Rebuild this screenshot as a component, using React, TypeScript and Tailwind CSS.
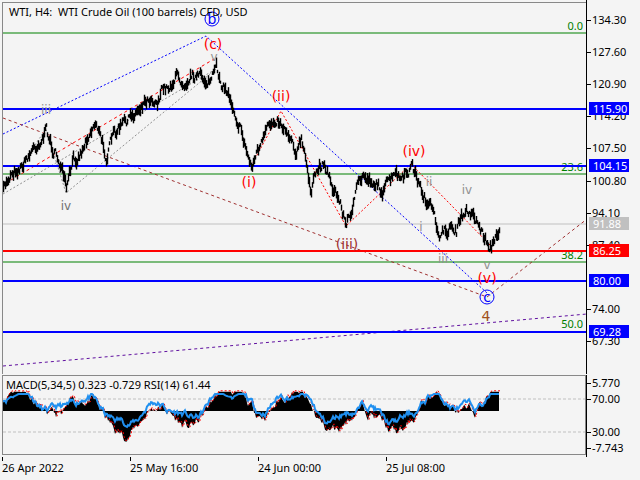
import React from "react";

const key: [number, number][] = [
  [2, 190], [10, 170], [20, 165], [30, 150], [38, 140], [45, 130], [52, 150], [58, 160], [65, 190], [72, 160], [80, 150], [88, 130], [95, 120], [100, 140], [105, 155], [112, 135], [120, 125], [128, 118], [135, 110], [142, 100], [150, 95], [156, 100], [160, 90], [168, 85], [175, 75], [182, 80], [190, 72], [200, 78], [208, 80], [215, 70], [222, 85], [228, 95], [232, 105], [240, 130], [245, 150], [250, 165], [256, 150], [262, 140], [268, 125], [275, 115], [282, 125], [290, 135], [295, 150], [300, 140], [305, 165], [310, 190], [316, 170], [322, 160], [328, 175], [333, 190], [340, 205], [345, 225], [352, 200], [357, 185], [362, 175], [372, 180], [382, 190], [388, 180], [395, 175], [402, 180], [410, 165], [415, 175], [420, 190], [430, 210], [435, 225], [440, 235], [450, 225], [455, 230], [460, 218], [468, 208], [475, 218], [482, 235], [487, 243], [490, 245], [496, 235], [498, 225],
];

function rng(seed: number) {
  let s = seed;
  return () => {
    s = (s * 16807) % 2147483647;
    return s / 2147483647;
  };
}

function series() {
  const r = rng(7);
  const bars: { x: number; hi: number; lo: number }[] = [];
  let n = 0;
  for (let x = 2; x <= 498; x++) {
    let i = 0;
    while (i < key.length - 2 && key[i + 1][0] < x) i++;
    const [x0, y0] = key[i];
    const [x1, y1] = key[i + 1];
    const t = Math.min(1, Math.max(0, (x - x0) / (x1 - x0)));
    n = n * 0.6 + (r() - 0.5) * 9;
    const y = y0 + (y1 - y0) * t + n;
    const h = 3 + r() * 9;
    bars.push({ x, hi: y - h / 2, lo: y + h / 2 });
  }
  return bars;
}

const bars = series();

function ind() {
  const r = rng(11);
  const pts: number[] = [];
  let v = 0;
  for (let x = 2; x <= 498; x++) {
    v = v * 0.85 + (r() - 0.5) * 5;
    const base = Math.sin(x / 11) * 9 + Math.sin(x / 37 + 1) * 7;
    pts.push(Math.max(-19, Math.min(12, v + base)));
  }
  return pts;
}
const osc = ind();

const Lbl = ({ x, y, t, c, s = 14 }: { x: number; y: number; t: string; c: string; s?: number }) => (
  <text x={x} y={y} fill={c} fontSize={s} textAnchor="middle" fontFamily="DejaVu Sans, sans-serif">{t}</text>
);

const axis: [string, number][] = [
  ["134.30", 20], ["127.60", 52], ["120.90", 84], ["114.20", 116], ["107.50", 148], ["100.80", 181], ["94.10", 213], ["87.40", 245], ["74.00", 309], ["67.30", 341],
];
const boxes: [string, number, string, string][] = [
  ["115.90", 108, "bg-[#0000ff]", "text-white"],
  ["104.15", 165, "bg-[#0000ff]", "text-white"],
  ["91.88", 223, "bg-[#c0c0c0]", "text-white"],
  ["86.25", 250, "bg-[#ff0000]", "text-white"],
  ["80.00", 280, "bg-[#0000ff]", "text-white"],
  ["69.28", 331, "bg-[#0000ff]", "text-white"],
];

export default function App() {
  const blue = "#0000ff";
  return (
    <div className="w-[640px] h-[480px] bg-[#f4f4f4] flex flex-col font-['DejaVu_Sans',sans-serif] text-[11px] text-black overflow-hidden">
      <div className="flex h-[374px]">
        <div className="relative w-[584px] border-l border-t border-[#888] ml-[2px] mt-[2px]">
          <div className="absolute left-[6px] top-[1px] text-[11px]">WTI, H4:&nbsp; WTI Crude Oil (100 barrels) CFD, USD</div>
          <svg width="584" height="372" className="block">
            <g transform="translate(-2,-2)">
              <line x1="2" x2="586" y1="32" y2="32" stroke="#008000" />
              <line x1="2" x2="586" y1="173" y2="173" stroke="#008000" />
              <line x1="2" x2="586" y1="261" y2="261" stroke="#008000" />
              <line x1="2" x2="586" y1="223" y2="223" stroke="#c0c0c0" />
              <text x="582" y="29" fill="#008000" fontSize="11" textAnchor="end">0.0</text>
              <text x="582" y="170" fill="#008000" fontSize="11" textAnchor="end">23.6</text>
              <text x="582" y="258" fill="#008000" fontSize="11" textAnchor="end">38.2</text>
              <text x="582" y="327" fill="#008000" fontSize="11" textAnchor="end">50.0</text>
              <polyline points="2,133 205,35 486,292" fill="none" stroke={blue} strokeDasharray="2 2" />
              <line x1="2" y1="117" x2="486" y2="296" stroke="#a03030" strokeDasharray="3 3" />
              <line x1="5" y1="182" x2="213" y2="58" stroke="#ff0000" strokeDasharray="3 3" />
              <line x1="2" y1="193" x2="215" y2="68" stroke="#909090" strokeDasharray="2 2" />
              <polyline points="250,165 280,110 345,225 410,163 490,245" fill="none" stroke="#ff0000" strokeDasharray="2 2" />
              <line x1="486" y1="296" x2="586" y2="218" stroke="#a03030" strokeDasharray="3 3" />
              <line x1="2" y1="365" x2="586" y2="313" stroke="#6010a0" strokeDasharray="3 3" />
              <polyline points="2,190 45,128 65,192 215,68" fill="none" stroke="#909090" strokeDasharray="2 2" />
              <line x1="2" x2="586" y1="108" y2="108" stroke={blue} strokeWidth="2" />
              <line x1="2" x2="586" y1="165" y2="165" stroke={blue} strokeWidth="2" />
              <line x1="2" x2="586" y1="280" y2="280" stroke={blue} strokeWidth="2" />
              <line x1="2" x2="586" y1="331" y2="331" stroke={blue} strokeWidth="2" />
              <line x1="2" x2="586" y1="250" y2="250" stroke="#ff0000" strokeWidth="2" />
              {bars.map((b) => (
                <line key={b.x} x1={b.x + 0.5} x2={b.x + 0.5} y1={b.hi} y2={b.lo} stroke="#000" strokeWidth="1.4" />
              ))}
              <circle cx="211" cy="18" r="7" fill="none" stroke={blue} />
              <Lbl x={211} y={23} t="b" c={blue} />
              <Lbl x={212} y={48} t="(c)" c="#ff0000" />
              <Lbl x={213} y={60} t="v" c="#909090" s={12} />
              <Lbl x={45} y={113} t="iii" c="#909090" s={12} />
              <Lbl x={65} y={209} t="iv" c="#707070" s={12} />
              <Lbl x={280} y={100} t="(ii)" c="#ff0000" />
              <Lbl x={248} y={186} t="(i)" c="#ff0000" />
              <Lbl x={413} y={155} t="(iv)" c="#ff0000" />
              <Lbl x={346} y={248} t="(iii)" c="#a03030" />
              <Lbl x={428} y={185} t="ii" c="#909090" s={12} />
              <Lbl x={420} y={230} t="i" c="#909090" s={12} />
              <Lbl x={442} y={262} t="iii" c="#909090" s={12} />
              <Lbl x={466} y={193} t="iv" c="#909090" s={12} />
              <Lbl x={486} y={268} t="v" c="#909090" s={12} />
              <Lbl x={486} y={282} t="(v)" c="#ff0000" />
              <circle cx="486" cy="296" r="7" fill="none" stroke={blue} />
              <Lbl x={486} y={301} t="c" c={blue} />
              <Lbl x={485} y={320} t="4" c="#a05020" />
            </g>
          </svg>
        </div>
        <div className="relative flex-1 border-l border-black">
          {axis.map(([t, y]) => (
            <div key={t} className="absolute left-0 flex items-center h-[12px]" style={{ top: y - 6 }}>
              <div className="w-[4px] h-px bg-black" />
              <span className="ml-[1px]">{t}</span>
            </div>
          ))}
          {boxes.map(([t, y, bg, fg]) => (
            <div key={t} className={`absolute left-[2px] h-[13px] w-[40px] leading-[13px] pl-[4px] ${bg} ${fg}`} style={{ top: y - 6 }}>{t}</div>
          ))}
        </div>
      </div>
      <div className="flex h-[82px] mt-[1px]">
        <div className="relative w-[584px] border border-[#888] ml-[2px] h-[80px]">
          <svg width="582" height="78" className="block">
            <line x1="0" x2="582" y1="23" y2="23" stroke="#c0c0c0" strokeDasharray="3 2" />
            <line x1="0" x2="582" y1="56" y2="56" stroke="#c0c0c0" strokeDasharray="3 2" />
            <path d={"M0,35 " + osc.map((v, i) => `L${i},${35 - v * 1.6}`).join(" ") + " L496,35 Z"} fill="#000" />
            <polyline points={osc.map((v, i) => `${i + 1},${35 - v * 1.6 - 1}`).join(" ")} fill="none" stroke="#ff0000" strokeDasharray="2 2" />
            <polyline points={osc.map((v, i) => `${i},${Math.max(18, 35 - v * 1.1 - 4 + Math.sin(i / 5) * 3)}`).join(" ")} fill="none" stroke="#2090f0" strokeWidth="2" />
          </svg>
          <div className="absolute left-[3px] top-[1px] text-[11px]">MACD(5,34,5) 0.323 -0.729 RSI(14) 61.44</div>
        </div>
        <div className="relative flex-1 border-l border-black">
          {([["5.770", 8], ["70.00", 24], ["30.00", 57], ["-7.743", 73]] as [string, number][]).map(([t, y]) => (
            <div key={t} className="absolute left-0 flex items-center h-[12px]" style={{ top: y - 6 }}>
              <div className="w-[4px] h-px bg-black" />
              <span className="ml-[1px]">{t}</span>
            </div>
          ))}
        </div>
      </div>
      <div className="relative h-[22px] ml-[2px] w-[584px]">
        {([["26 Apr 2022", 0], ["25 May 16:00", 128], ["24 Jun 00:00", 256], ["25 Jul 08:00", 384]] as [string, number][]).map(([t, x]) => (
          <div key={t} className="absolute top-0" style={{ left: x }}>
            <div className="w-px h-[4px] bg-black" />
            <div className="-mt-[1px]">{t}</div>
          </div>
        ))}
      </div>
    </div>
  );
}
